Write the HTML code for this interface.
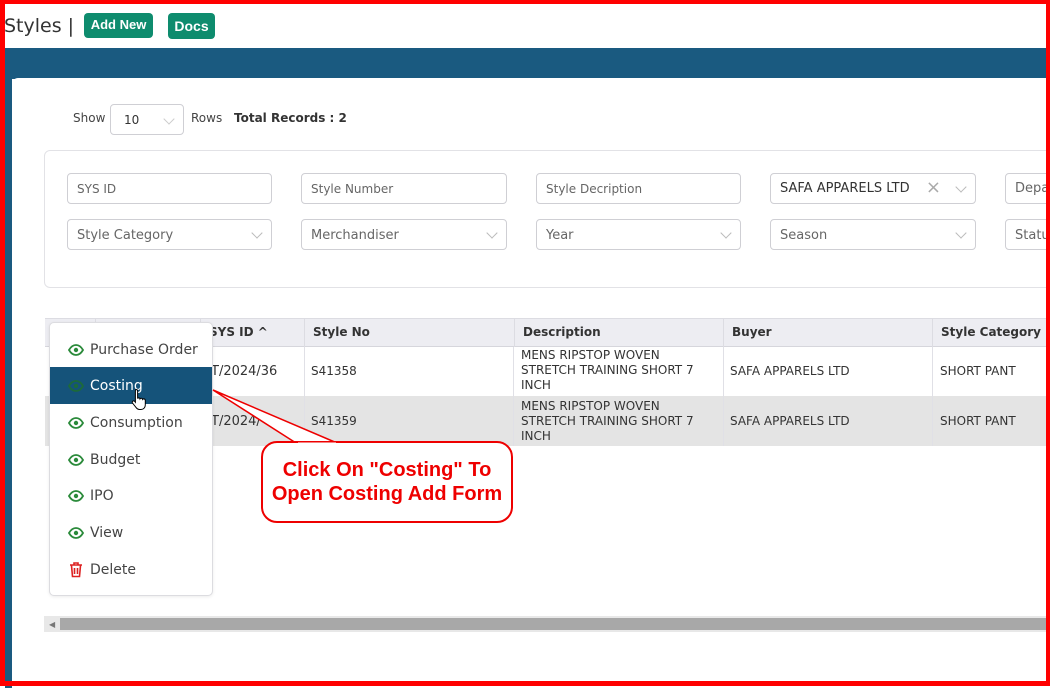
<!DOCTYPE html>
<html><head><meta charset="utf-8"><style>
*{box-sizing:border-box;margin:0;padding:0}
body{width:1050px;height:686px;overflow:hidden;background:#fff;font-family:"DejaVu Sans","Liberation Sans",sans-serif;position:relative;color:#333}
.a{position:absolute}
.inp{position:absolute;height:31px;border:1px solid #cfcfd4;border-radius:4px;font-size:12px;color:#666;padding:8px 9px;white-space:nowrap;overflow:hidden;background:#fff}
.sel{font-size:13px;padding:7px 9px}
.chev{position:absolute;right:10px;top:9px;width:8px;height:8px;border-right:1.5px solid #bbb;border-bottom:1.5px solid #bbb;transform:rotate(45deg)}
.th{position:absolute;top:319px;height:28px;font-size:12px;font-weight:bold;color:#333;padding:6px 8px;border-left:1px solid #dcdce2;white-space:nowrap}
.td{position:absolute;font-size:12px;color:#333;padding:0 7px;white-space:nowrap;line-height:15px}
.mi{position:absolute;left:50px;width:162px;height:37px;font-size:14px;color:#444;padding:11px 0 0 40px}
.eye{position:absolute;left:18px;top:13px}
</style></head><body>
<svg width="0" height="0" style="position:absolute"><defs><symbol id="eye" viewBox="0 0 16 12"><path d="M1 6C3 2.5 5.5 1 8 1s5 1.5 7 5c-2 3.5-4.5 5-7 5S3 9.5 1 6z" fill="none" stroke="currentColor" stroke-width="1.8"/><circle cx="8" cy="6" r="2.2" fill="currentColor"/></symbol></defs></svg>
<div class="a" style="left:0;top:0;width:1050px;height:686px;border:5px solid #f00;border-top-width:4px;border-right-width:4px;z-index:50;pointer-events:none"></div>
<div class="a" style="left:4px;top:15px;font-size:19px;color:#333;font-family:'DejaVu Sans',sans-serif">Styles |</div>
<div class="a" style="left:84px;top:13px;width:69px;height:25px;background:#0e8c6e;border-radius:4px;color:#fff;font-size:13px;font-weight:bold;text-align:center;line-height:23px;font-family:'Liberation Sans',sans-serif">Add New</div>
<div class="a" style="left:168px;top:13px;width:47px;height:26px;background:#0e8c6e;border-radius:4px;color:#fff;font-size:14px;font-weight:bold;text-align:center;line-height:26px;font-family:'Liberation Sans',sans-serif">Docs</div>
<div class="a" style="left:5px;top:48px;width:1045px;height:31px;background:#1a5a80"></div>
<div class="a" style="left:5px;top:78px;width:7px;height:610px;background:#1a5a80"></div>
<div class="a" style="left:12px;top:78px;width:1040px;height:610px;background:#fff;border-radius:6px 0 0 0"></div>
<div class="a" style="left:73px;top:111px;font-size:12px;color:#444">Show</div>
<div class="inp" style="left:110px;top:104px;width:74px;height:31px;color:#333;padding:8px 13px">10<div class="chev" style="top:10px;right:10px;border-color:#ccc"></div></div>
<div class="a" style="left:191px;top:111px;font-size:12px;color:#444">Rows</div>
<div class="a" style="left:234px;top:111px;font-size:12px;font-weight:bold;color:#333">Total Records : 2</div>
<div class="a" style="left:44px;top:150px;width:1020px;height:138px;border:1px solid #e2e2e6;border-radius:6px"></div>
<div class="inp" style="left:67px;top:173px;width:205px">SYS ID</div>
<div class="inp" style="left:301px;top:173px;width:206px">Style Number</div>
<div class="inp" style="left:536px;top:173px;width:205px">Style Decription</div>
<div class="inp sel" style="left:770px;top:173px;width:206px;color:#333">SAFA APPARELS LTD<span class="a" style="right:34px;top:3px;font-size:18px;color:#aaa">×</span><div class="chev"></div></div>
<div class="inp sel" style="left:1005px;top:173px;width:60px">Depa</div>
<div class="inp sel" style="left:67px;top:219px;width:205px;padding-top:8px">Style Category<div class="chev"></div></div>
<div class="inp sel" style="left:301px;top:219px;width:206px;padding-top:8px">Merchandiser<div class="chev"></div></div>
<div class="inp sel" style="left:536px;top:219px;width:205px;padding-top:8px">Year<div class="chev"></div></div>
<div class="inp sel" style="left:770px;top:219px;width:206px;padding-top:8px">Season<div class="chev"></div></div>
<div class="inp sel" style="left:1005px;top:219px;width:60px;padding-top:8px">Statu</div>
<div class="a" style="left:45px;top:318px;width:1005px;height:29px;background:#ededf2;border-top:1px solid #dcdce2;border-bottom:1px solid #d6d6dc"></div>
<div class="th" style="left:95px;width:105px"></div>
<div class="th" style="left:200px;width:104px">SYS ID ^</div>
<div class="th" style="left:304px;width:210px">Style No</div>
<div class="th" style="left:514px;width:209px">Description</div>
<div class="th" style="left:723px;width:209px">Buyer</div>
<div class="th" style="left:932px;width:118px">Style Category</div>
<div class="a" style="left:45px;top:396px;width:1005px;height:50px;background:#e4e4e4"></div>
<div class="a" style="left:513px;top:347px;width:1px;height:99px;background:#e0e0e6"></div>
<div class="a" style="left:723px;top:347px;width:1px;height:99px;background:#e0e0e6"></div>
<div class="a" style="left:932px;top:347px;width:1px;height:99px;background:#e0e0e6"></div>
<div class="a" style="left:304px;top:347px;width:1px;height:99px;background:#e0e0e6"></div>
<div class="td" style="left:204px;top:364px;font-size:13px">T/2024/36</div>
<div class="td" style="left:204px;top:414px;font-size:13px">T/2024/</div>
<div class="td" style="left:304px;top:364px">S41358</div>
<div class="td" style="left:304px;top:414px">S41359</div>
<div class="td" style="left:514px;top:348px">MENS RIPSTOP WOVEN<br>STRETCH TRAINING SHORT 7<br>INCH</div>
<div class="td" style="left:514px;top:399px">MENS RIPSTOP WOVEN<br>STRETCH TRAINING SHORT 7<br>INCH</div>
<div class="td" style="left:723px;top:364px">SAFA APPARELS LTD</div>
<div class="td" style="left:723px;top:414px">SAFA APPARELS LTD</div>
<div class="td" style="left:933px;top:364px">SHORT PANT</div>
<div class="td" style="left:933px;top:414px">SHORT PANT</div>
<div class="a" style="left:44px;top:616px;width:1006px;height:16px;background:#e8e8e8"></div>
<div class="a" style="left:60px;top:618px;width:990px;height:12px;background:#a8a8a8"></div>
<div class="a" style="left:49px;top:620px;font-size:8px;color:#777">◀</div>
<div class="a" style="left:49px;top:322px;width:164px;height:274px;background:#fff;border:1px solid #dcdce0;border-radius:5px;box-shadow:0 1px 3px rgba(0,0,0,.08)"></div>
<div class="mi" style="top:331px"><svg class="eye" width="16" height="12" style="color:#2a8a3a"><use href="#eye"/></svg>Purchase Order</div>
<div class="mi" style="top:367px;background:#15537a;color:#fff"><svg class="eye" width="16" height="12" style="color:#1c6a3a"><use href="#eye"/></svg>Costing</div>
<div class="mi" style="top:404px"><svg class="eye" width="16" height="12" style="color:#2a8a3a"><use href="#eye"/></svg>Consumption</div>
<div class="mi" style="top:441px"><svg class="eye" width="16" height="12" style="color:#2a8a3a"><use href="#eye"/></svg>Budget</div>
<div class="mi" style="top:477px"><svg class="eye" width="16" height="12" style="color:#2a8a3a"><use href="#eye"/></svg>IPO</div>
<div class="mi" style="top:514px"><svg class="eye" width="16" height="12" style="color:#2a8a3a"><use href="#eye"/></svg>View</div>
<div class="mi" style="top:551px"><svg class="a" style="left:19px;top:11px" width="14" height="16" viewBox="0 0 14 16"><path d="M1 3h12M5 3V1h4v2M2.5 3.5l1 11h7l1-11M5.5 6v6M8.5 6v6" fill="none" stroke="#d22" stroke-width="1.6"/></svg>Delete</div>
<svg class="a" style="left:131px;top:388px;z-index:5" width="18" height="24" viewBox="0 0 18 24"><path d="M5 1.5c1 0 1.6.6 1.6 1.6v7l1-.2c.8 0 1.3.4 1.4 1 .3-.5.8-.7 1.4-.6.7.1 1.1.5 1.2 1.1.3-.4.8-.6 1.4-.5.8.2 1.3.8 1.3 1.600v4.5c0 2.5-1.8 4.5-4.3 4.5H8.5c-1.5 0-2.4-.6-3.3-1.8L1.5 15c-.5-.8-.3-1.5.4-1.9.7-.4 1.4-.2 1.900.4l.6.8V3.1C4.4 2.1 4.4 1.5 5 1.5z" fill="#fff" stroke="#000" stroke-width="1"/></svg>
<svg class="a" style="left:0;top:0;z-index:10" width="1050" height="686"><path d="M296 443 L213 390 L337 443" fill="#fff" stroke="#e00" stroke-width="1.5"/></svg>
<div class="a" style="left:261px;top:441px;width:252px;height:82px;border:2px solid #e00;border-radius:16px;background:#fff;z-index:11;color:#e00;font-family:'Liberation Sans',sans-serif;font-size:20px;font-weight:bold;text-align:center;line-height:24px;padding-top:15px;white-space:nowrap">Click On "Costing" To<br>Open Costing Add Form</div>
<svg class="a" style="left:0;top:0;z-index:12" width="1050" height="686"><path d="M298 444 L336 444" stroke="#fff" stroke-width="3"/></svg>
</body></html>
